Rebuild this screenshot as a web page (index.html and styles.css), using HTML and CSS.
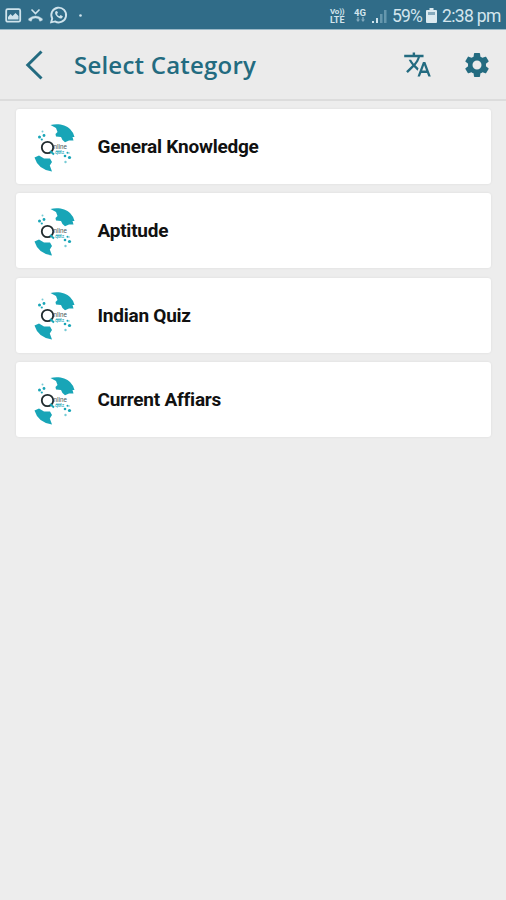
FILE: index.html
```html
<!DOCTYPE html>
<html lang="en">
<head>
<meta charset="utf-8">
<title>Select Category</title>
<link rel="stylesheet" href="styles.css">
</head>
<body>
<svg class="defs" aria-hidden="true">
  <symbol id="logo" viewBox="0 0 60 60">
    <g fill="#18a5b7">
      <path d="M26.500 8C33 6 42 7.500 46 12Q49.500 15.500 50.500 20L48.500 20L49.500 23.500L45 23.500L41 25.200L38.500 23L37 20L32 19.500L31.500 17L33.500 15L32 11Z"/>
      <path d="M10.500 40.500L15 38.500L20 41.500L26 41.500L28 45L25.800 48.500L28 54.500Q14 52.500 10.500 40.500Z"/>
      <path d="M32 33.500L38 33.500L36.500 35.500L32 35Z" opacity=".6"/>
      <circle cx="15.500" cy="20" r="1.500"/><circle cx="20" cy="18.500" r="1.400"/><circle cx="17.800" cy="22.500" r="1.100"/>
      <circle cx="41" cy="39" r="1.300"/><circle cx="45.500" cy="40.500" r="1.600"/><circle cx="43.500" cy="35.800" r="1"/>
    </g>
    <g fill="#77cbd5"><circle cx="18.500" cy="14.500" r="1"/><circle cx="41.500" cy="45" r="1.200"/><circle cx="45" cy="36" r=".8"/></g>
    <circle cx="23.500" cy="30.500" r="5.700" fill="none" stroke="#202b2e" stroke-width="1.800"/>
    <path d="M26 34L30 37.500" stroke="#18a5b7" stroke-width="2"/>
    <text x="29.500" y="31.500" class="logo-name" textLength="13.500" lengthAdjust="spacingAndGlyphs">nline</text>
    <text x="31" y="36.500" class="logo-sub">quiz</text>
  </symbol>
</svg>

<div class="status">
  <svg class="status-icons" viewBox="0 0 110 30" fill="none" stroke="#cfe3ec">
    <rect x="6.200" y="9.200" width="14" height="12.500" rx="1.500" stroke-width="1.800"/>
    <path d="M8 19.500V17L10.500 14L12.500 16L15.500 13L18.500 16V19.500Z" fill="#cfe3ec" stroke="none"/>
    <path d="M31.500 9.500L35.500 13.500L39.500 9.500" stroke-width="1.600"/>
    <path d="M28.700 20.300V18.700Q35.500 13.400 42.300 18.700V20.300L39.800 21.300L38.600 18.700Q35.500 17.500 32.400 18.700L31.200 21.300Z" fill="#cfe3ec" stroke-width=".4"/>
    <path d="M51.200 22.300L52.200 18.500A7.400 7.400 0 1 1 55 21.400Z" stroke-width="1.900"/>
    <path d="M55.700 11.200C53.300 13.500 58.500 19.500 61.800 18.200L63 16.400L60.700 15L59.400 16.300Q57.600 15.500 57 13.900L58 12.800L57 10.900Z" fill="#cfe3ec" stroke="none"/>
    <circle cx="80.500" cy="15.500" r="1.300" fill="#cfe3ec" stroke="none"/>
  </svg>
  <div class="status-right">
    <div class="volte"><span class="vo">Vo))</span><span>LTE</span></div>
    <div class="network"><span>4G</span>
      <svg width="10" height="6" viewBox="0 0 10 6" fill="#82aabd"><path d="M0 2.500H1.300V0H2.700V2.500H4L2 5ZM5 2.500H6.300V0H7.700V2.500H9L7 5Z"/></svg>
    </div>
    <svg class="signal" width="15" height="15" viewBox="0 0 15 15"><path d="M0 12H2V14H0ZM4 9H6V14H4Z" fill="#cfe3ec"/><path d="M8 5H10.500V14H8ZM12 1H14.500V14H12Z" fill="#6597ad"/></svg>
    <span class="percent">59%</span>
    <svg class="battery" width="11" height="16" viewBox="0 0 11 16"><path d="M3.500 0H7.500V2H10Q11 2 11 3V14Q11 15 10 15H1Q0 15 0 14V3Q0 2 1 2H3.500Z" fill="#dceaf0"/><path d="M2 4H9V7H2Z" fill="#86aabc"/></svg>
    <span class="clock">2:38 pm</span>
  </div>
</div>

<header class="toolbar">
  <svg class="back" width="18" height="30" viewBox="0 0 18 30"><path d="M16.500 1.500L2.800 15L16.500 28.500" fill="none" stroke="#236b80" stroke-width="3"/></svg>
  <h1>Select Category</h1>
  <svg class="translate" viewBox="0 0 24 24"><path d="M12.870 15.070l-2.540-2.510.03-.03c1.740-1.940 2.980-4.170 3.710-6.530H17V4h-7V2H8v2H1v1.990h11.170C11.500 7.920 10.440 9.750 9 11.350 8.070 10.320 7.300 9.190 6.690 8h-2c.73 1.630 1.730 3.170 2.980 4.560l-5.090 5.020L4 19l5-5 3.110 3.110.76-2.040zM18.500 10h-2L12 22h2l1.120-3h4.750L21 22h2l-4.500-12zm-2.620 7l1.620-4.330L19.120 17h-3.240z"/></svg>
  <svg class="settings" viewBox="0 0 24 24"><path d="M19.140 12.940c.04-.3.060-.610.060-.940s-.02-.640-.07-.940l2.030-1.580c.18-.14.23-.41.120-.61l-1.920-3.320c-.12-.22-.37-.29-.59-.22l-2.390.96c-.5-.38-1.030-.7-1.620-.94l-.36-2.540c-.04-.24-.24-.41-.48-.41h-3.840c-.24 0-.43.17-.47.41l-.36 2.540c-.59.24-1.130.57-1.620.94l-2.390-.96c-.22-.08-.47 0-.59.22L2.740 8.870c-.12.21-.08.47.12.61l2.030 1.580c-.05.3-.09.63-.09.94s.02.64.07.94l-2.030 1.580c-.18.14-.23.41-.12.61l1.920 3.320c.12.22.37.29.59.22l2.390-.96c.5.38 1.030.7 1.620.94l.36 2.540c.05.24.24.41.48.41h3.840c.24 0 .44-.17.47-.41l.36-2.540c.59-.24 1.130-.56 1.620-.94l2.390.96c.22.08.47 0 .59-.22l1.920-3.320c.12-.22.07-.47-.12-.61l-2.010-1.580zM12 15.600A3.600 3.600 0 1 1 12 8.400A3.600 3.600 0 0 1 12 15.600z"/></svg>
</header>

<main class="list">
  <div class="card"><svg class="logo"><use href="#logo"/></svg><span>General Knowledge</span></div>
  <div class="card"><svg class="logo"><use href="#logo"/></svg><span>Aptitude</span></div>
  <div class="card"><svg class="logo"><use href="#logo"/></svg><span>Indian Quiz</span></div>
  <div class="card"><svg class="logo"><use href="#logo"/></svg><span>Current Affiars</span></div>
</main>
</body>
</html>
```
FILE: styles.css
```css
* { box-sizing: border-box; }
body {
  margin: 0;
  min-height: 900px;
  background: #ededed;
  font-family: Roboto, sans-serif;
}
.defs { display: none; }
.status {
  height: 30px;
  display: flex;
  justify-content: space-between;
  background: #306c88;
  border-bottom: 1px solid #9cb9c7;
  color: #d3e5ed;
}
.status-icons { width: 110px; height: 30px; }
.status-right { display: flex; align-items: center; padding: 3px 6px 0 0; white-space: nowrap; }
.volte { width: 15px; margin-right: 9px; font-size: 9px; line-height: 8px; font-weight: 700; }
.volte span { display: block; }
.volte .vo { font-size: 8px; letter-spacing: -.2px; }
.network { width: 13px; margin-right: 5px; font-size: 9.500px; line-height: 8px; font-weight: 700; }
.network span, .network svg { display: block; }
.network svg { margin-left: 2px; }
.signal { margin-right: 5px; }
.percent { width: 30px; font-size: 17.500px; letter-spacing: -.8px; }
.battery { margin: 0 5px 0 4px; }
.clock { width: 58px; font-size: 17.500px; letter-spacing: -.650px; }
.toolbar {
  height: 71px;
  display: flex;
  align-items: center;
  padding: 0 14px 2px 25px;
  background: #ebebeb;
  border-bottom: 2px solid #dcdcdc;
}
.toolbar svg { position: relative; top: 1px; }
.toolbar h1 {
  width: 190px;
  margin: 2px 0 0 31px;
  color: #236b80;
  font: 600 24px/34px "Open Sans", sans-serif;
  letter-spacing: .220px;
  white-space: nowrap;
}
.toolbar .translate, .toolbar .settings { fill: #236b80; }
.translate { width: 29px; height: 29px; margin-left: auto; }
.settings { width: 30px; height: 30px; margin-left: 30px; }
.list {
  display: grid;
  gap: 9.400px;
  padding: 8px 15px 0 16px;
}
.card {
  height: 75px;
  display: flex;
  align-items: center;
  padding-left: 8px;
  background: #fff;
  border-radius: 3px;
  box-shadow: 0 0 2px #d8d8d8;
  color: #111;
  font-size: 19px;
  font-weight: 700;
  letter-spacing: -.240px;
}
.logo { width: 60px; height: 60px; margin-right: 13.500px; }
.logo-name { font: 7px Roboto, sans-serif; fill: #47565a; letter-spacing: 0; }
.logo-sub { font: 5px Roboto, sans-serif; fill: #18a5b7; letter-spacing: 0; }
```
